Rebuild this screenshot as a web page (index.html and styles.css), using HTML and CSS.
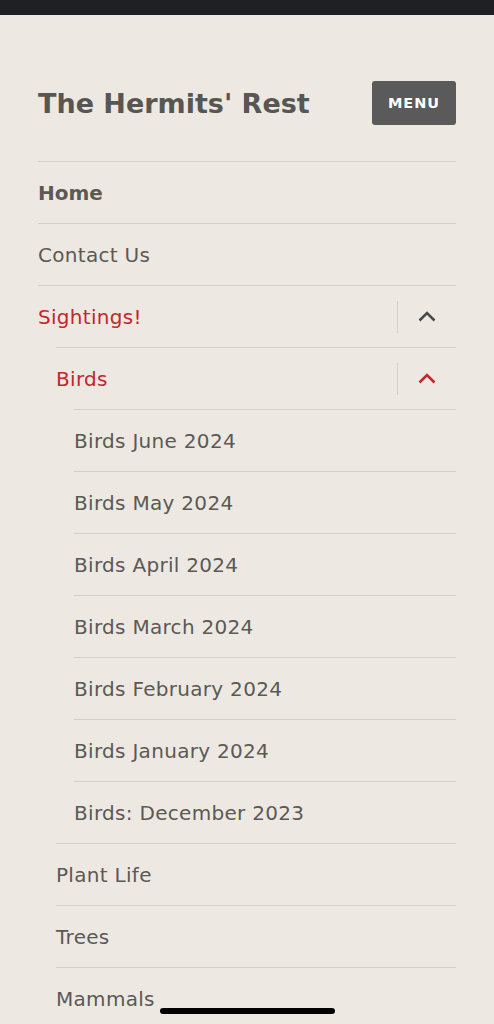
FILE: index.html
```html
<!DOCTYPE html>
<html lang="en">
<head>
    <meta charset="UTF-8">
    <meta name="viewport" content="width=device-width, initial-scale=1.0">
    <title>The Hermits' Rest</title>
    <link rel="stylesheet" href="styles.css">
</head>
<body>
    <div class="status-bar"></div>

    <div class="page">
        <!-- Site header -->
        <header class="site-header">
            <h1 class="site-title">The Hermits' Rest</h1>
            <button type="button" class="menu-toggle">MENU</button>
        </header>

        <!-- Main navigation, opened -->
        <nav class="main-nav">
            <ul class="menu">
                <li><div class="row"><a href="#" class="current">Home</a></div></li>
                <li><div class="row"><a href="#">Contact Us</a></div></li>
                <li>
                    <div class="row">
                        <a href="#" class="active">Sightings!</a>
                        <span class="toggle">
                            <svg width="18" height="11" viewBox="0 0 18 11"><path d="M1.5 9.5 L9 2 L16.5 9.5" fill="none" stroke="currentColor" stroke-width="2.6"/></svg>
                        </span>
                    </div>
                    <ul class="sub-menu">
                        <li>
                            <div class="row">
                                <a href="#" class="active">Birds</a>
                                <span class="toggle open">
                                    <svg width="18" height="11" viewBox="0 0 18 11"><path d="M1.5 9.5 L9 2 L16.5 9.5" fill="none" stroke="currentColor" stroke-width="2.6"/></svg>
                                </span>
                            </div>
                            <ul class="sub-menu">
                                <li><div class="row"><a href="#">Birds June 2024</a></div></li>
                                <li><div class="row"><a href="#">Birds May 2024</a></div></li>
                                <li><div class="row"><a href="#">Birds April 2024</a></div></li>
                                <li><div class="row"><a href="#">Birds March 2024</a></div></li>
                                <li><div class="row"><a href="#">Birds February 2024</a></div></li>
                                <li><div class="row"><a href="#">Birds January 2024</a></div></li>
                                <li><div class="row"><a href="#">Birds: December 2023</a></div></li>
                            </ul>
                        </li>
                        <li><div class="row"><a href="#">Plant Life</a></div></li>
                        <li><div class="row"><a href="#">Trees</a></div></li>
                        <li><div class="row"><a href="#">Mammals</a></div></li>
                    </ul>
                </li>
            </ul>
        </nav>
    </div>

    <div class="home-indicator"></div>
</body>
</html>
```

FILE: styles.css
```css
body {
    margin: 0;
    background-color: #ede9e2;
    font-family: "DejaVu Sans", "Open Sans", sans-serif;
    color: #555;
    height: 1024px;
    overflow: hidden;
}
.status-bar {
    height: 15px;
    background-color: #1e2023;
}
.page {
    padding: 66px 38px 0 38px;
}
.site-header {
    display: flex;
    justify-content: space-between;
    align-items: center;
    height: 44px;
    padding-bottom: 36px;
}
.site-title {
    margin: 0;
    font-size: 27px;
    font-weight: bold;
    color: #575653;
}
.menu-toggle {
    width: 84px;
    height: 44px;
    padding: 0;
    background-color: #5a5a5a;
    color: #fff;
    border: none;
    border-radius: 3px;
    font-family: inherit;
    font-size: 14.5px;
    font-weight: bold;
    letter-spacing: 1px;
}
.menu, .sub-menu {
    list-style: none;
    margin: 0;
    padding: 0;
}
.sub-menu {
    margin-left: 18px;
}
.row {
    display: flex;
    align-items: center;
    height: 61px;
    border-top: 1px solid #d3cfc9;
}
.row a {
    flex: 1;
    color: #5b5955;
    text-decoration: none;
    font-size: 20px;
    letter-spacing: 0.3px;
}
.row a.current {
    font-weight: bold;
    letter-spacing: 0;
}
.row a.active {
    color: #c0282d;
}
.toggle {
    display: flex;
    align-items: center;
    justify-content: center;
    width: 58px;
    height: 32px;
    border-left: 1px solid #d3cfc9;
    color: #4a4a4a;
}
.toggle.open {
    color: #c0282d;
}
.home-indicator {
    position: fixed;
    left: 160px;
    top: 1008px;
    width: 175px;
    height: 6px;
    border-radius: 3px;
    background-color: #000;
}
```
